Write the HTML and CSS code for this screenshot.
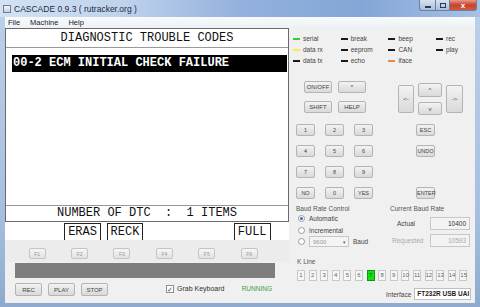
FILE: index.html
```html
<!DOCTYPE html>
<html lang="en">
<head>
    <meta charset="UTF-8">
    <title>CASCADE 0.9.3 ( rutracker.org )</title>
    <link rel="stylesheet" href="styles.css">
</head>
<body>

<div class="window">
    <div class="titlebar">
        <span class="app-icon"></span>
        <span class="title">CASCADE 0.9.3 ( rutracker.org )</span>
        <div class="caption">
            <span class="cap min"><i></i></span>
            <span class="cap max"><i></i></span>
            <span class="cap close">x</span>
        </div>
    </div>

    <div class="client">
        <div class="menubar">
            <span>File</span>
            <span>Machine</span>
            <span>Help</span>
        </div>

        <div class="main">
            <!-- left: emulated scan tool screen -->
            <div class="left">
                <div class="screen">
                    <div class="scr-head">DIAGNOSTIC TROUBLE CODES</div>
                    <div class="scr-body">
                        <div class="dtc-row">00-2 ECM INITIAL CHECK FAILURE</div>
                    </div>
                    <div class="scr-foot">NUMBER OF DTC  :  1 ITEMS</div>
                </div>

                <div class="soft-labels">
                    <span></span>
                    <span class="soft">ERAS</span>
                    <span class="soft">RECK</span>
                    <span></span>
                    <span></span>
                    <span class="soft">FULL</span>
                </div>

                <div class="fkeys">
                    <button class="fkey">F1</button>
                    <button class="fkey">F2</button>
                    <button class="fkey">F3</button>
                    <button class="fkey">F4</button>
                    <button class="fkey">F5</button>
                    <button class="fkey">F6</button>
                </div>

                <div class="progress"></div>

                <div class="controls">
                    <button class="btn wide">REC</button>
                    <button class="btn wide">PLAY</button>
                    <button class="btn wide">STOP</button>
                    <span class="check">&#10003;</span>
                    <span class="check-label">Grab Keyboard</span>
                    <span class="running">RUNNING</span>
                </div>
            </div>

            <!-- right: status leds, keypad, settings -->
            <div class="right">
                <div class="leds">
                    <div class="led"><span class="dash green"></span>serial</div>
                    <div class="led"><span class="dash"></span>break</div>
                    <div class="led"><span class="dash"></span>beep</div>
                    <div class="led"><span class="dash"></span>rec</div>
                    <div class="led"><span class="dash yellow"></span>data rx</div>
                    <div class="led"><span class="dash"></span>eeprom</div>
                    <div class="led"><span class="dash"></span>CAN</div>
                    <div class="led"><span class="dash"></span>play</div>
                    <div class="led"><span class="dash"></span>data tx</div>
                    <div class="led"><span class="dash"></span>echo</div>
                    <div class="led"><span class="dash orange"></span>iface</div>
                </div>

                <div class="keypad">
                    <div class="kp-top">
                        <div class="kp-fn">
                            <button class="btn">ON/OFF</button>
                            <button class="btn">*</button>
                            <button class="btn">SHIFT</button>
                            <button class="btn">HELP</button>
                        </div>
                        <div class="kp-arrows">
                            <button class="btn left-arrow">&lt;-</button>
                            <button class="btn up">^</button>
                            <button class="btn down">v</button>
                            <button class="btn right-arrow">-&gt;</button>
                        </div>
                    </div>
                    <div class="kp-grid">
                        <button class="btn">1</button>
                        <button class="btn">2</button>
                        <button class="btn">3</button>
                        <span></span>
                        <button class="btn">ESC</button>

                        <button class="btn">4</button>
                        <button class="btn">5</button>
                        <button class="btn">6</button>
                        <span></span>
                        <button class="btn">UNDO</button>

                        <button class="btn">7</button>
                        <button class="btn">8</button>
                        <button class="btn">9</button>
                        <span></span>
                        <span></span>

                        <button class="btn">NO</button>
                        <button class="btn">0</button>
                        <button class="btn">YES</button>
                        <span></span>
                        <button class="btn">ENTER</button>
                    </div>
                </div>

                <div class="baud">
                    <div class="group baud-ctl">
                        <div class="group-title">Baud Rate Control</div>
                        <div class="radio-row"><span class="radio on"></span>Automatic</div>
                        <div class="radio-row"><span class="radio"></span>Incremental</div>
                        <div class="radio-row">
                            <span class="radio"></span>
                            <span class="combo">9600<span class="combo-arrow">&#9662;</span></span>
                            <span class="unit">Baud</span>
                        </div>
                    </div>
                    <div class="group baud-cur">
                        <div class="group-title">Current Baud Rate</div>
                        <div class="field-row">
                            <span class="field-label">Actual</span>
                            <span class="field">10400</span>
                        </div>
                        <div class="field-row disabled">
                            <span class="field-label">Requested</span>
                            <span class="field">10593</span>
                        </div>
                    </div>
                </div>

                <div class="kline">
                    <div class="group-title">K Line</div>
                    <div class="pins">
                        <span>1</span><span>2</span><span>3</span><span>4</span><span>5</span>
                        <span>6</span><span class="active">7</span><span>8</span><span>9</span><span>10</span>
                        <span>11</span><span>12</span><span>13</span><span>14</span><span>15</span>
                    </div>
                </div>

                <div class="iface">
                    <span class="field-label">Interface</span>
                    <span class="iface-box">FT232R USB UAI</span>
                </div>
            </div>
        </div>
    </div>
</div>

</body>
</html>
```

FILE: styles.css
```css
* {
    box-sizing: border-box;
}
body {
    margin: 0;
    width: 480px;
    height: 307px;
    overflow: hidden;
    font-family: "Liberation Sans", Arial, sans-serif;
    font-size: 7px;
    color: #333;
    background: #9db8dc;
}
button {
    font-family: inherit;
    margin: 0;
    padding: 0;
}
.window {
    width: 480px;
    height: 307px;
    display: flex;
    flex-direction: column;
    background: linear-gradient(to bottom, #bcd1ea, #a6bfe0 70%, #8ea9cf);
}

/* title bar */
.titlebar {
    height: 17px;
    display: flex;
    align-items: center;
    padding-left: 3px;
    background: linear-gradient(to right, #d3e2f4 0%, #bfd3ec 25%, #93b1dc 50%, #84a6d6 75%, #a6c0e4 100%);
}
.app-icon {
    width: 8px;
    height: 8px;
    border: 1px solid #6d7d8f;
    background: linear-gradient(#f4f6f8, #c9d1da);
    margin-right: 3px;
}
.title {
    font-size: 8.5px;
    color: #1d2b3c;
}
.caption {
    margin-left: auto;
    margin-right: 3px;
    align-self: flex-start;
    display: flex;
}
.cap {
    height: 11px;
    display: flex;
    align-items: center;
    justify-content: center;
    border: 1px solid #6a80a0;
    border-top: none;
    background: linear-gradient(#d5e1f0, #a9bfdc);
}
.cap.min {
    width: 16px;
    border-right: none;
    border-radius: 0 0 0 3px;
}
.cap.min i {
    width: 6px;
    height: 2px;
    margin-top: 3px;
    background: #2a3a50;
}
.cap.max {
    width: 14px;
    border-right: none;
}
.cap.max i {
    width: 6px;
    height: 5px;
    border: 1px solid #2a3a50;
}
.cap.close {
    width: 28px;
    border-radius: 0 0 3px 0;
    background: linear-gradient(#e89a88, #c8412b 50%, #d25a3f);
    color: #fff;
    font-weight: bold;
    font-size: 8px;
}

/* client area */
.client {
    flex: 1;
    margin: 0 5px 4px 5px;
    background: #f0f0f0;
    display: flex;
    flex-direction: column;
}
.menubar {
    height: 11px;
    display: flex;
    align-items: center;
    gap: 10px;
    padding-left: 3px;
    font-size: 7.5px;
    color: #222;
    background: linear-gradient(#f8fafc, #edf1f6);
}
.main {
    flex: 1;
    display: flex;
    min-width: 0;
}

/* left column */
.left {
    width: 284px;
    flex-shrink: 0;
    display: flex;
    flex-direction: column;
}
.screen {
    height: 194px;
    border: 1px solid #6a6a6a;
    background: #fff;
    display: flex;
    flex-direction: column;
    font-family: "Liberation Mono", "Courier New", monospace;
    font-size: 12px;
    color: #111;
}
.scr-head {
    height: 19px;
    line-height: 18px;
    border-bottom: 1px solid #999;
    text-align: center;
}
.scr-body {
    flex: 1;
    padding: 7px 1px 0 6px;
}
.dtc-row {
    height: 17px;
    line-height: 17px;
    background: #000;
    color: #fff;
    font-weight: bold;
    padding-left: 1px;
    white-space: pre;
}
.scr-foot {
    height: 16px;
    line-height: 15px;
    border-top: 1px solid #999;
    text-align: center;
    white-space: pre;
}
.soft-labels {
    height: 18px;
    background: #fff;
    display: grid;
    grid-template-columns: repeat(6, 42.4px);
    padding-left: 14px;
}
.soft {
    justify-self: center;
    margin-top: 1px;
    height: 17px;
    padding: 0 3px;
    border: 1px solid #222;
    border-bottom: none;
    font-family: "Liberation Mono", "Courier New", monospace;
    font-size: 12px;
    line-height: 16px;
    color: #111;
}
.fkeys {
    height: 22px;
    display: grid;
    grid-template-columns: repeat(6, 42.4px);
    padding: 8px 0 0 11px;
    background: #ececec;
}
.fkey {
    justify-self: center;
    width: 17px;
    height: 11px;
    font-size: 5px;
    color: #999;
    border: 1px solid #c4c4c4;
    border-radius: 2px;
    background: linear-gradient(#f6f6f6, #e2e2e2);
}
.progress {
    height: 15px;
    margin: 1px 14px 0 10px;
    background: #7e7e7e;
}
.controls {
    flex: 1;
    display: flex;
    align-items: flex-start;
    gap: 6px;
    padding: 5px 17px 0 10px;
}
.btn {
    height: 12px;
    font-size: 6px;
    color: #444;
    border: 1px solid #b4b4b4;
    border-radius: 2px;
    background: linear-gradient(#f3f3f3, #e5e5e5 50%, #dadada);
}
.btn.wide {
    width: 27px;
    height: 13px;
}
.check {
    margin: 2px 0 0 52px;
    width: 8px;
    height: 8px;
    border: 1px solid #8f8f8f;
    background: #fff;
    font-size: 7px;
    line-height: 7px;
    text-align: center;
    color: #2b4f86;
}
.check-label {
    margin: 2px 0 0 -3px;
    font-size: 7px;
    color: #333;
}
.running {
    margin: 2px 0 0 auto;
    font-size: 6.5px;
    color: #3aa03a;
}

/* right column */
.right {
    flex: 1;
    min-width: 0;
    display: flex;
    flex-direction: column;
}
.leds {
    height: 44px;
    padding: 5px 0 0 4px;
    display: grid;
    grid-template-columns: 47.7px 47.7px 47.7px 1fr;
    grid-auto-rows: 11px;
}
.led {
    display: flex;
    align-items: center;
    font-size: 6.5px;
    color: #444;
}
.dash {
    width: 7px;
    height: 2px;
    margin-right: 3px;
    background: #1a1a1a;
}
.dash.green {
    background: #2fd02f;
}
.dash.yellow {
    background: #f3ee4a;
}
.dash.orange {
    background: #f0883a;
}
.keypad {
    height: 133px;
}
.kp-top {
    display: flex;
    padding: 9px 0 0 15px;
}
.kp-fn {
    display: grid;
    grid-template-columns: 28px 28px;
    grid-auto-rows: 12px;
    column-gap: 6px;
    row-gap: 8px;
}
.kp-arrows {
    margin: 2px 0 0 32px;
    display: grid;
    grid-template-columns: 16px 24px 17px;
    grid-template-rows: 14px 13px;
    column-gap: 4px;
    row-gap: 5px;
}
.kp-arrows .btn {
    height: auto;
}
.left-arrow {
    grid-column: 1;
    grid-row: 1 / 3;
    margin: 2px 0;
}
.up {
    grid-column: 2;
    grid-row: 1;
}
.down {
    grid-column: 2;
    grid-row: 2;
}
.right-arrow {
    grid-column: 3;
    grid-row: 1 / 3;
    margin: 2px 0;
}
.kp-grid {
    margin-top: 9px;
    padding: 0 40px 0 7px;
    display: grid;
    grid-template-columns: 19px 19px 19px 1fr 19px;
    grid-auto-rows: 12px;
    column-gap: 10px;
    row-gap: 9px;
}
.kp-grid .btn {
    font-size: 5.5px;
}

/* baud rate */
.baud {
    height: 51px;
    display: flex;
    gap: 3px;
    padding: 0 3px;
}
.group-title {
    font-size: 6.5px;
    color: #555;
    height: 8px;
    line-height: 8px;
}
.baud-ctl {
    width: 92px;
    padding: 0 0 0 4px;
}
.baud-cur {
    flex: 1;
    padding: 0 0 0 3px;
}
.radio-row {
    height: 11.5px;
    display: flex;
    align-items: center;
    font-size: 6.5px;
    color: #444;
}
.radio {
    width: 7px;
    height: 7px;
    border-radius: 50%;
    border: 1px solid #9a9a9a;
    background: #fff;
    margin: 0 4px 0 2px;
    display: flex;
    align-items: center;
    justify-content: center;
}
.radio.on::after {
    content: "";
    width: 3px;
    height: 3px;
    border-radius: 50%;
    background: #3b6bb0;
}
.combo {
    width: 40px;
    height: 11px;
    border: 1px solid #c6c6c6;
    background: #f4f4f4;
    color: #999;
    display: flex;
    align-items: center;
    padding-left: 3px;
    font-size: 6px;
}
.combo-arrow {
    margin-left: auto;
    margin-right: 2px;
    color: #666;
    font-size: 5px;
}
.unit {
    margin-left: 4px;
}
.field-row {
    display: flex;
    align-items: center;
    height: 14px;
    font-size: 6.5px;
    color: #444;
}
.field-row:nth-child(2) {
    margin-top: 3px;
    padding-left: 7px;
}
.field-row:nth-child(3) {
    margin-top: 3px;
    padding-left: 2px;
}
.field {
    margin-left: auto;
    margin-right: 2px;
    width: 40px;
    height: 13px;
    border: 1px solid #c8c8c8;
    background: #f3f3f3;
    text-align: right;
    padding: 2px 3px 0 0;
    font-size: 6.5px;
    color: #333;
}
.disabled {
    color: #aaa;
}
.disabled .field {
    color: #aaa;
}

/* k line */
.kline {
    height: 30px;
    padding: 2px 0 0 8px;
}
.pins {
    display: flex;
    gap: 3.6px;
    margin-top: 4px;
}
.pins span {
    width: 8px;
    height: 11px;
    border: 1px solid #c8c8c8;
    background: #f6f6f6;
    font-size: 6px;
    line-height: 9px;
    text-align: center;
    color: #666;
}
.pins span.active {
    background: #10e010;
    border-color: #0a9a0a;
    color: #0a5a0a;
}
.iface {
    flex: 1;
    display: flex;
    align-items: flex-start;
    padding: 2px 3px 0 97px;
}
.iface .field-label {
    margin-top: 3px;
    font-size: 6.5px;
    color: #444;
}
.iface-box {
    margin-left: 3px;
    width: 57px;
    height: 12px;
    border: 1px solid #c0c0c0;
    background: #fff;
    font-size: 6.5px;
    font-weight: bold;
    color: #222;
    line-height: 10px;
    padding-left: 2px;
    white-space: nowrap;
    overflow: hidden;
}
```
